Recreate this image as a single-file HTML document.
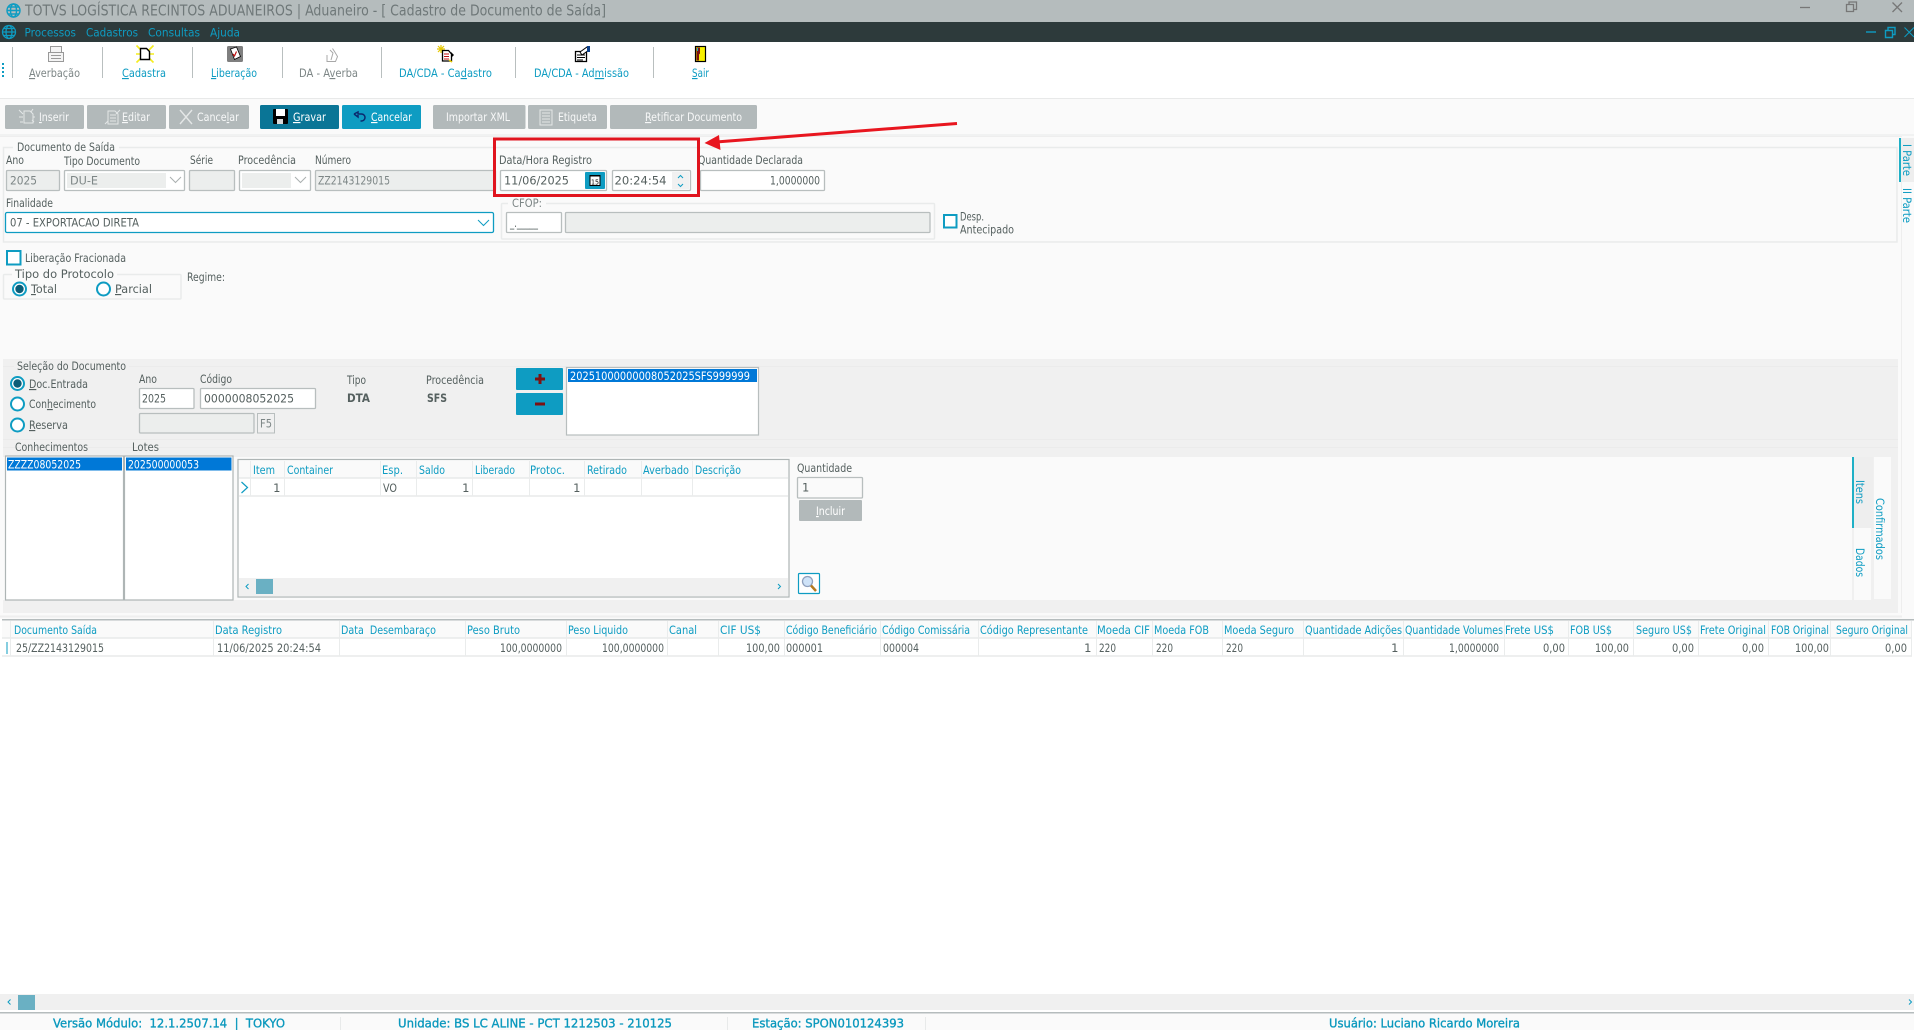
<!DOCTYPE html>
<html lang="pt-BR">
<head>
<meta charset="utf-8">
<title>TOTVS LOGÍSTICA RECINTOS ADUANEIROS</title>
<style>
html,body{margin:0;padding:0;width:1914px;height:1030px;overflow:hidden;background:#fff}
svg{display:block;font-family:"DejaVu Sans","Liberation Sans",sans-serif;font-size:11.5px}
.l{fill:#55605f}
.d{fill:#7d8686}
.t{fill:#0e9cc2}
.w{fill:#fff}
.s{fill:#0a98bd;font-size:12.5px;stroke:#0a98bd;stroke-width:.35}
.u{text-decoration:underline}
.ib{fill:#fff;stroke:#b8bebe;stroke-width:1.3}
.ig{fill:#eceeed;stroke:#b8bebe;stroke-width:1.3}
.gb{fill:none;stroke:#e9ebeb;stroke-width:1.5}
.sep{stroke:#b9bfbf;stroke-width:1}
.gl{stroke:#e8eaea;stroke-width:1.5}
</style>
</head>
<body>
<svg width="1914" height="1030" viewBox="0 0 1914 1030" xmlns="http://www.w3.org/2000/svg">
<rect width="1914" height="1030" fill="#fff"/>

<!-- title bar -->
<rect width="1914" height="22" fill="#b5bcbd"/>
<g fill="none" stroke="#0e9cc2" stroke-width="1.4">
  <circle cx="13.5" cy="10.5" r="6.5"/><ellipse cx="13.5" cy="10.5" rx="3" ry="6.5"/><path d="M7 10.5h13M8.3 7h10.4M8.3 14h10.4"/>
</g>
<text x="25" y="15.5" textLength="581" lengthAdjust="spacingAndGlyphs" style="font-size:15px" fill="#6f7879">TOTVS LOGÍSTICA RECINTOS ADUANEIROS | Aduaneiro - [ Cadastro de Documento de Saída]</text>
<g fill="none" stroke="#777" stroke-width="1.3">
  <path d="M1800 7.5h10"/>
  <path d="M1846.5 4.5h7v7h-7zM1849 4.5v-2.5h7.5v7.5h-3"/>
  <path d="M1892.5 2.5l9.5 9.5M1902 2.5l-9.5 9.5"/>
</g>

<!-- menu bar -->
<rect y="22" width="1914" height="20" fill="#2d3a3b"/>
<g fill="none" stroke="#0e9cc2" stroke-width="1.3">
  <circle cx="9" cy="32" r="6.5"/><ellipse cx="9" cy="32" rx="3" ry="6.5"/><path d="M2.5 32h13M4 28.5h10M4 35.5h10"/>
</g>
<text class="t" x="24.5" y="36.5" textLength="51.5" lengthAdjust="spacingAndGlyphs">Processos</text>
<text class="t" x="86" y="36.5" textLength="52" lengthAdjust="spacingAndGlyphs">Cadastros</text>
<text class="t" x="148" y="36.5" textLength="52" lengthAdjust="spacingAndGlyphs">Consultas</text>
<text class="t" x="210" y="36.5" textLength="30" lengthAdjust="spacingAndGlyphs">Ajuda</text>
<g fill="none" stroke="#0e9cc2" stroke-width="1.4">
  <path d="M1866 32h10"/>
  <path d="M1885.5 30.5h7v7h-7zM1888 30.5v-3h7v7h-2.5"/>
  <path d="M1904.5 27.5l9.5 9.5M1914 27.5l-9.5 9.5" stroke-width="1"/>
</g>

<!-- toolbar -->
<g fill="#0e9cc2"><rect x="2" y="63" width="2" height="2"/><rect x="2" y="67" width="2" height="2"/><rect x="2" y="71" width="2" height="2"/><rect x="2" y="75" width="2" height="2"/></g>
<g class="sep"><path d="M12.5 47v31M102.5 47v31M192.5 47v31M282.5 47v31M381.5 47v31M515.5 47v31M653.5 47v31"/></g>

<!-- Averbacao icon -->
<g fill="#f4f4f4" stroke="#999" stroke-width="1"><rect x="50.5" y="46.5" width="11" height="6"/><rect x="48.5" y="52.5" width="15" height="9"/><path d="M51 55.5h10M51 58.5h10" fill="none"/></g>
<!-- Cadastra icon -->
<g><path d="M136.500 45.500l17 17M153.500 45.500l-17 17M136 54h18" stroke="#f6ee1e" stroke-width="1.600"/><path d="M140.500 48.500h6l3 3v8h-9z" fill="#fff" stroke="#000" stroke-width="1.400"/></g>
<!-- Liberacao icon -->
<g><rect x="227" y="46" width="16" height="16" rx="1.5" fill="#7f7f7f"/><path d="M230.5 49l6-2 4 9.5-6 3z" fill="#fff" stroke="#000" stroke-width=".8"/><path d="M233 54l1.5 2 2-4.5" fill="none" stroke="#c01010" stroke-width="1.2"/></g>
<!-- DA-Averba icon -->
<g fill="none" stroke="#a8a8a8" stroke-width="1"><path d="M326.5 61.5h9l2-5-3-5-2-3M330 50l3 3-2 7M327 55v6"/></g>
<!-- DA/CDA Cadastro icon -->
<g><path d="M438 46l6 6M444 46l-6 6M441 45v8M437 49h8" stroke="#e6c800" stroke-width="1.2"/><path d="M442.5 50.5h6l3 3.5v7h-9z" fill="#fff" stroke="#000" stroke-width="1.3"/><path d="M444 54h5M444 56.5h5M444 59h5" stroke="#c01010" stroke-width="1"/><path d="M451 52l3 3-3 3z" fill="#000"/><path d="M449 60l3 2" stroke="#e6c800" stroke-width="1.6"/></g>
<!-- Admissao icon -->
<g><path d="M575.5 51.5h11v10h-11z" fill="#fff" stroke="#000" stroke-width="1.3"/><path d="M577 55h8M577 57.5h8M577 60h6" stroke="#000" stroke-width="1"/><path d="M580 52l7-5 2 3-7 5z" fill="#fff" stroke="#000" stroke-width="1"/><rect x="587" y="46" width="3" height="6" fill="#0b3f8a"/></g>
<!-- Sair icon -->
<g><rect x="695.5" y="46.5" width="10" height="15" fill="#f8f000" stroke="#000" stroke-width="1.2"/><path d="M696.5 47.5h3.5v6l-1 1v6h-2.5z" fill="#7d1111"/><rect x="697" y="48" width="1" height="3" fill="#18b4c8"/></g>

<text class="d" x="29" y="77" textLength="51" lengthAdjust="spacingAndGlyphs"><tspan class="u">A</tspan>verbação</text>
<text class="t" x="122" y="77" textLength="44" lengthAdjust="spacingAndGlyphs"><tspan class="u">C</tspan>adastra</text>
<text class="t" x="211" y="77" textLength="46" lengthAdjust="spacingAndGlyphs"><tspan class="u">L</tspan>iberação</text>
<text class="d" x="299" y="77" textLength="59" lengthAdjust="spacingAndGlyphs">DA - A<tspan class="u">v</tspan>erba</text>
<text class="t" x="399" y="77" textLength="93" lengthAdjust="spacingAndGlyphs">DA/CDA - Ca<tspan class="u">d</tspan>astro</text>
<text class="t" x="534" y="77" textLength="95" lengthAdjust="spacingAndGlyphs">DA/CDA - Ad<tspan class="u">m</tspan>issão</text>
<text class="t" x="692" y="77" textLength="17" lengthAdjust="spacingAndGlyphs"><tspan class="u">S</tspan>air</text>

<!-- main background -->
<rect y="98" width="1914" height="915" fill="#fafafa"/>
<rect y="98" width="1914" height="1" fill="#e8e9e9"/>
<rect y="134.5" width="1914" height="1" fill="#e8e9e9"/>
<rect y="136" width="1902" height="1" fill="#eeeeee"/>

<!-- buttons -->
<g fill="#b2b9ba">
  <rect x="5" y="105" width="79" height="24" rx="1.5"/><rect x="87" y="105" width="79" height="24" rx="1.5"/><rect x="169" y="105" width="80" height="24" rx="1.5"/>
  <rect x="433" y="105" width="92.500" height="24" rx="1.5"/><rect x="528" y="105" width="79" height="24" rx="1.5"/><rect x="610" y="105" width="147" height="24" rx="1.5"/>
</g>
<rect x="260" y="105" width="79" height="24" rx="1.5" fill="#0a7596"/>
<rect x="342" y="105" width="79" height="24" rx="1.5" fill="#0e9cc2"/>
<g fill="none" stroke="#e4e7e7" stroke-width="1">
  <path d="M24 111h6l3 3v9h-9zM19 110l4 4M33 109l-2 3M20 122h3M19 117h4M35 117h-2M34 122l-2-2"/>
  <path d="M108 111h7l3 3v10h-10zM110 115h6M110 118h6M110 121h6M105 124l3-3M120 110l-4 4"/>
  <path d="M180 110l12 14M192 110l-12 14" stroke-width="1.4"/>
  <path d="M540 110h12v15h-12zM542 113h8M542 116h8M542 119h8M542 122h8"/>
</g>
<g><rect x="273" y="109" width="15" height="15" rx="1" fill="#000"/><rect x="276" y="109" width="9" height="7" fill="#fff"/><rect x="277" y="119" width="6" height="5" fill="#d8d8d8"/></g>
<path d="M354 114l4-2v2h3.500a3.500 3.500 0 0 1 0 7h-1M354 114l4 3v-2" fill="none" stroke="#0b2a6e" stroke-width="1.5"/>
<g class="w">
  <text class="w" x="39" y="121" textLength="30" lengthAdjust="spacingAndGlyphs" opacity=".9"><tspan class="u">I</tspan>nserir</text>
  <text class="w" x="122" y="121" textLength="28" lengthAdjust="spacingAndGlyphs" opacity=".9"><tspan class="u">E</tspan>ditar</text>
  <text class="w" x="197" y="121" textLength="42" lengthAdjust="spacingAndGlyphs" opacity=".9">Cance<tspan class="u">l</tspan>ar</text>
  <text class="w" x="293" y="121" textLength="33" lengthAdjust="spacingAndGlyphs"><tspan class="u">G</tspan>ravar</text>
  <text class="w" x="371" y="121" textLength="41" lengthAdjust="spacingAndGlyphs"><tspan class="u">C</tspan>ancelar</text>
  <text class="w" x="446" y="121" textLength="64" lengthAdjust="spacingAndGlyphs" opacity=".9">Importar XML</text>
  <text class="w" x="558" y="121" textLength="39" lengthAdjust="spacingAndGlyphs" opacity=".9">Etiqueta</text>
  <text class="w" x="645" y="121" textLength="97" lengthAdjust="spacingAndGlyphs" opacity=".9"><tspan class="u">R</tspan>etificar Documento</text>
</g>

<!-- Documento de Saida group -->
<rect class="gb" x="3.500" y="147.500" width="1893.500" height="94.500"/>
<rect x="13" y="141" width="106" height="12" fill="#fafafa"/>
<text class="l" x="17" y="151" textLength="98" lengthAdjust="spacingAndGlyphs">Documento de Saída</text>

<text class="l" x="6" y="164" textLength="18" lengthAdjust="spacingAndGlyphs">Ano</text>
<text class="l" x="64" y="165" textLength="76" lengthAdjust="spacingAndGlyphs">Tipo Documento</text>
<text class="l" x="190" y="164" textLength="23" lengthAdjust="spacingAndGlyphs">Série</text>
<text class="l" x="238" y="164" textLength="58" lengthAdjust="spacingAndGlyphs">Procedência</text>
<text class="l" x="315" y="164" textLength="36" lengthAdjust="spacingAndGlyphs">Número</text>

<rect class="ig" x="6.500" y="170.500" width="53" height="20" rx="1"/>
<text class="d" x="10" y="184.500" textLength="27" lengthAdjust="spacingAndGlyphs">2025</text>
<rect class="ib" x="64.500" y="170.500" width="120" height="20" rx="1"/>
<rect x="67" y="173" width="99" height="15" fill="#eceeed"/>
<text class="d" x="70" y="184.500" textLength="28" lengthAdjust="spacingAndGlyphs">DU-E</text>
<path d="M170 177l5.500 5.500 5.500-5.500" fill="none" stroke="#aab0b0"/>
<rect class="ig" x="189.500" y="170.500" width="45" height="20" rx="1"/>
<rect class="ib" x="239.500" y="170.500" width="71" height="20" rx="1"/>
<rect x="242" y="173" width="49" height="15" fill="#eceeed"/>
<path d="M295 177l5.500 5.500 5.500-5.500" fill="none" stroke="#aab0b0"/>
<rect class="ig" x="315.500" y="170.500" width="180" height="20" rx="1"/>
<text class="d" x="318" y="184.500" textLength="72" lengthAdjust="spacingAndGlyphs">ZZ2143129015</text>

<text class="l" x="6" y="207" textLength="47" lengthAdjust="spacingAndGlyphs">Finalidade</text>
<rect x="5.500" y="212.500" width="488" height="20" rx="1.500" fill="#fff" stroke="#0e9cc2" stroke-width="1.300"/>
<text class="l" x="10" y="226.500" textLength="129" lengthAdjust="spacingAndGlyphs">07 - EXPORTACAO DIRETA</text>
<path d="M478 220l5.500 5.500 5.500-5.500" fill="none" stroke="#0e9cc2"/>

<rect class="gb" x="501.500" y="203.500" width="433" height="35.500" rx="1"/>
<rect x="508" y="198" width="38" height="11" fill="#fafafa"/>
<text class="d" x="512" y="207" textLength="30" lengthAdjust="spacingAndGlyphs">CFOP:</text>
<rect class="ib" x="506.500" y="212.500" width="55" height="20" rx="1"/>
<text class="l" x="510" y="227" textLength="28" lengthAdjust="spacingAndGlyphs">_._____</text>
<rect class="ig" x="565.500" y="212.500" width="364.500" height="20" rx="1"/>
<rect x="944" y="215" width="12.500" height="12.500" fill="#fff" stroke="#0e9cc2" stroke-width="2"/>
<text class="l" x="960" y="220.500" textLength="24" lengthAdjust="spacingAndGlyphs">Desp.</text>
<text class="l" x="960" y="233.500" textLength="54" lengthAdjust="spacingAndGlyphs">Antecipado</text>

<!-- Data/Hora -->
<text class="l" x="499" y="164" textLength="93" lengthAdjust="spacingAndGlyphs">Data/Hora Registro</text>
<rect class="ib" x="500.500" y="170.500" width="106" height="20" rx="1"/>
<text class="l" x="504" y="184.500" textLength="65" lengthAdjust="spacingAndGlyphs">11/06/2025</text>
<rect x="585" y="172" width="20" height="17" rx="1" fill="#0e9cc2"/>
<rect x="590" y="175.500" width="10" height="10" fill="#fff" stroke="#000" stroke-width="1"/>
<rect x="590" y="175" width="10" height="1.500" fill="#000"/>
<text x="591" y="184.500" style="font-size:7px" textLength="8" lengthAdjust="spacingAndGlyphs" fill="#000">15</text>
<rect class="ib" x="612.500" y="170.500" width="78" height="20" rx="1"/>
<text class="l" x="614.500" y="184.500" textLength="52" lengthAdjust="spacingAndGlyphs">20:24:54</text>
<rect x="672" y="172" width="17" height="17" fill="#f1f1f1"/>
<path d="M678 178l2.500-2.500 2.500 2.500M678 184l2.500 2.500 2.500-2.500" fill="none" stroke="#0e9cc2"/>
<text class="l" x="698" y="164" textLength="105" lengthAdjust="spacingAndGlyphs">Quantidade Declarada</text>
<rect class="ib" x="700.500" y="170.500" width="124" height="20" rx="1"/>
<text class="l" x="770" y="184.500" textLength="50" lengthAdjust="spacingAndGlyphs">1,0000000</text>
<!-- red box & arrow -->
<rect x="494.500" y="139" width="204" height="56.500" fill="none" stroke="#e0141e" stroke-width="3"/>
<path d="M957 123.500L716 142" stroke="#e8161f" stroke-width="3" fill="none"/>
<path d="M704.500 143L719 135l1.500 15z" fill="#e8161f"/>

<!-- I/II Parte tabs -->
<rect x="1899" y="138" width="15" height="44" fill="#eeeeee"/>
<rect x="1899" y="138" width="2" height="44" fill="#1fb0c6"/>
<path d="M1901.500 182v437" stroke="#eeeeee" stroke-width="1"/>
<text class="t" transform="translate(1903,144) rotate(90)" textLength="32" lengthAdjust="spacingAndGlyphs" style="font-size:11.500px" x="0" y="0">I Parte</text>
<text class="t" transform="translate(1903,188) rotate(90)" textLength="35" lengthAdjust="spacingAndGlyphs" style="font-size:11.500px" x="0" y="0">II Parte</text>

<!-- Liberacao Fracionada -->
<rect x="7" y="251" width="13.500" height="13.500" fill="#fff" stroke="#0e9cc2" stroke-width="2"/>
<text class="l" x="25" y="262" textLength="101" lengthAdjust="spacingAndGlyphs">Liberação Fracionada</text>
<rect class="gb" x="3.500" y="274.500" width="177.500" height="24.500" rx="1"/>
<rect x="12" y="268" width="105" height="12" fill="#fafafa"/>
<text class="l" x="15" y="278" textLength="99" lengthAdjust="spacingAndGlyphs">Tipo do Protocolo</text>
<circle cx="19.500" cy="289" r="6.500" fill="#fff" stroke="#0e9cc2" stroke-width="2"/>
<circle cx="19.500" cy="289" r="4.200" fill="#0b5d78"/>
<text class="l" x="31" y="293" textLength="26" lengthAdjust="spacingAndGlyphs"><tspan class="u">T</tspan>otal</text>
<circle cx="103.500" cy="289" r="6.500" fill="#fff" stroke="#0e9cc2" stroke-width="2"/>
<text class="l" x="115" y="293" textLength="37" lengthAdjust="spacingAndGlyphs"><tspan class="u">P</tspan>arcial</text>
<text class="l" x="187" y="281" textLength="38" lengthAdjust="spacingAndGlyphs">Regime:</text>

<!-- Selecao do Documento panel -->
<rect x="3" y="359" width="1895" height="254" fill="#f0f0f0"/>
<path d="M3 366.500h1895M3 439.500h1895M3 447.500h1895" stroke="#ebebeb" stroke-width="1"/>
<rect x="14" y="360" width="115" height="12" fill="#f0f0f0"/>
<text class="l" x="17" y="370" textLength="109" lengthAdjust="spacingAndGlyphs">Seleção do Documento</text>
<circle cx="17.500" cy="383.500" r="6.500" fill="#fff" stroke="#0e9cc2" stroke-width="2"/>
<circle cx="17.500" cy="383.500" r="4.200" fill="#0b5d78"/>
<circle cx="17.500" cy="404" r="6.500" fill="#fff" stroke="#0e9cc2" stroke-width="2"/>
<circle cx="17.500" cy="425" r="6.500" fill="#fff" stroke="#0e9cc2" stroke-width="2"/>
<text class="l" x="29" y="388" textLength="59" lengthAdjust="spacingAndGlyphs"><tspan class="u">D</tspan>oc.Entrada</text>
<text class="l" x="29" y="408" textLength="67" lengthAdjust="spacingAndGlyphs">Con<tspan class="u">h</tspan>ecimento</text>
<text class="l" x="29" y="429" textLength="39" lengthAdjust="spacingAndGlyphs"><tspan class="u">R</tspan>eserva</text>
<text class="l" x="139" y="383" textLength="18" lengthAdjust="spacingAndGlyphs">Ano</text>
<text class="l" x="200" y="383" textLength="32" lengthAdjust="spacingAndGlyphs">Código</text>
<rect class="ib" x="139.500" y="388.500" width="54.500" height="20" rx="1"/>
<text class="l" x="142" y="402.500" textLength="24" lengthAdjust="spacingAndGlyphs">2025</text>
<rect class="ib" x="200.500" y="388.500" width="115" height="20" rx="1"/>
<text class="l" x="204" y="402.500" textLength="90" lengthAdjust="spacingAndGlyphs">0000008052025</text>
<rect class="ig" x="139.500" y="413.500" width="114.500" height="19.500" rx="1"/>
<rect x="257.500" y="413.500" width="17" height="19.500" fill="#f0f0f0" stroke="#b8bebe"/>
<text class="d" x="260" y="427.500" textLength="12" lengthAdjust="spacingAndGlyphs">F5</text>
<text class="l" x="347" y="384" textLength="19" lengthAdjust="spacingAndGlyphs">Tipo</text>
<text class="l" x="426" y="384" textLength="58" lengthAdjust="spacingAndGlyphs">Procedência</text>
<text class="l" x="347" y="402" textLength="23" lengthAdjust="spacingAndGlyphs" style="font-weight:700">DTA</text>
<text class="l" x="427" y="402" textLength="20" lengthAdjust="spacingAndGlyphs" style="font-weight:700">SFS</text>
<rect x="516" y="368" width="47" height="22" rx="1" fill="#0e9cc2"/>
<rect x="516" y="393" width="47" height="22" rx="1" fill="#0e9cc2"/>
<path d="M540 374v10M535 379h10" stroke="#7d1111" stroke-width="3"/>
<path d="M535 404h10" stroke="#7d1111" stroke-width="3"/>
<rect x="566.500" y="367.500" width="192" height="67.500" fill="#fff" stroke="#b8bebe" stroke-width="1.200"/>
<rect x="568" y="369" width="189" height="13" fill="#0078d7"/>
<text class="w" x="570" y="380" textLength="180" lengthAdjust="spacingAndGlyphs">20251000000008052025SFS999999</text>

<text class="l" x="15" y="451" textLength="73" lengthAdjust="spacingAndGlyphs">Conhecimentos</text>
<text class="l" x="132" y="451" textLength="27" lengthAdjust="spacingAndGlyphs">Lotes</text>

<rect x="3" y="457" width="1849" height="143" fill="#fafafa"/>
<rect x="5.500" y="456" width="118" height="144" fill="#fff" stroke="#aeb5b5" stroke-width="1.200"/>
<rect x="7" y="457.500" width="115" height="13" fill="#0078d7"/>
<text class="w" x="8" y="468.500" textLength="73" lengthAdjust="spacingAndGlyphs">ZZZZ08052025</text>
<rect x="124.500" y="456" width="108.500" height="144" fill="#fff" stroke="#aeb5b5" stroke-width="1.200"/>
<rect x="126" y="457.500" width="105.500" height="13" fill="#0078d7"/>
<text class="w" x="128" y="468.500" textLength="71" lengthAdjust="spacingAndGlyphs">202500000053</text>

<!-- items grid -->
<rect x="238" y="459.500" width="551" height="137.500" fill="#fff" stroke="#aeb5b5" stroke-width="1.200"/>
<rect x="239" y="460.500" width="549" height="17.500" fill="#fafafa"/>
<path d="M239 478h549M239 496h549" stroke="#e8eaea" stroke-width="1.500"/>
<path d="M250.500 461v35M284.500 461v35M380.500 461v35M416.500 461v35M472.500 461v35M529.500 461v35M584.500 461v35M641.500 461v35M692.500 461v35" stroke="#eaecec" stroke-width="1"/>
<g class="t">
<text class="t" x="253" y="474" textLength="22" lengthAdjust="spacingAndGlyphs">Item</text>
<text class="t" x="287" y="474" textLength="46" lengthAdjust="spacingAndGlyphs">Container</text>
<text class="t" x="382" y="474" textLength="21" lengthAdjust="spacingAndGlyphs">Esp.</text>
<text class="t" x="419" y="474" textLength="26" lengthAdjust="spacingAndGlyphs">Saldo</text>
<text class="t" x="475" y="474" textLength="40" lengthAdjust="spacingAndGlyphs">Liberado</text>
<text class="t" x="530" y="474" textLength="35" lengthAdjust="spacingAndGlyphs">Protoc.</text>
<text class="t" x="587" y="474" textLength="40" lengthAdjust="spacingAndGlyphs">Retirado</text>
<text class="t" x="643" y="474" textLength="46" lengthAdjust="spacingAndGlyphs">Averbado</text>
<text class="t" x="695" y="474" textLength="46" lengthAdjust="spacingAndGlyphs">Descrição</text>
</g>
<path d="M241.500 482l6 5.500-6 5.500" fill="none" stroke="#0e9cc2" stroke-width="1.200"/>
<text class="l" x="280.500" y="492" text-anchor="end">1</text>
<text class="l" x="383" y="492" textLength="14" lengthAdjust="spacingAndGlyphs">VO</text>
<text class="l" x="469.500" y="492" text-anchor="end">1</text>
<text class="l" x="580.500" y="492" text-anchor="end">1</text>
<rect x="239" y="578" width="549" height="18" fill="#f0f0f0"/>
<rect x="256" y="579" width="17" height="15" fill="#6ab0c3"/>
<path d="M248.500 584l-2.500 2.500 2.500 2.500M778 584l2.500 2.500-2.500 2.500" fill="none" stroke="#0e9cc2"/>

<text class="l" x="797" y="472" textLength="55" lengthAdjust="spacingAndGlyphs">Quantidade</text>
<rect x="797.500" y="477.500" width="65" height="20.500" rx="1" fill="#fafafa" stroke="#b8bebe" stroke-width="1.300"/>
<text class="l" x="802" y="491.500">1</text>
<rect x="799" y="500" width="63" height="21" rx="1" fill="#b2b9ba"/>
<text class="w" x="816" y="515" textLength="29" lengthAdjust="spacingAndGlyphs"><tspan class="u">I</tspan>ncluir</text>
<rect x="798.500" y="573.500" width="21" height="20" rx="1" fill="#fff" stroke="#0e9cc2" stroke-width="1.200"/>
<circle cx="807.500" cy="581.500" r="5" fill="#cfe3f8" stroke="#8fa0bd" stroke-width="1.300"/>
<path d="M811 585.500l5 5.500" stroke="#b57a20" stroke-width="2.500"/>

<!-- Itens/Dados/Confirmados tabs -->
<rect x="1852" y="457" width="21" height="71" fill="#eeeeee"/>
<rect x="1852" y="457" width="2" height="71" fill="#1fb0c6"/>
<rect x="1854" y="528" width="17" height="72" fill="#fafafa"/>
<rect x="1874" y="457" width="17" height="142" fill="#fafafa"/>
<text class="t" transform="translate(1856,480) rotate(90)" textLength="24" lengthAdjust="spacingAndGlyphs" x="0" y="0">Itens</text>
<text class="t" transform="translate(1856,548) rotate(90)" textLength="29" lengthAdjust="spacingAndGlyphs" x="0" y="0">Dados</text>
<text class="t" transform="translate(1876,498) rotate(90)" textLength="62" lengthAdjust="spacingAndGlyphs" x="0" y="0">Confirmados</text>

<!-- lower grid -->
<rect y="613" width="1914" height="6" fill="#fafafa"/>
<rect x="0" y="615.500" width="1902" height="2" fill="#efefef"/>
<rect y="619" width="1914" height="400" fill="#fff"/>
<rect x="2" y="619" width="1912" height="1.500" fill="#b5bcbd"/>
<rect x="2" y="620.500" width="1910" height="17.500" fill="#fafafa"/>
<path d="M2 638h1910M2 656h1910" stroke="#e8eaea" stroke-width="1.500"/>
<path d="M10.500 621v35M213.500 621v35M339.500 621v35M465.500 621v35M566.500 621v35M667.500 621v35M718.500 621v35M784.500 621v35M880.500 621v35M978.500 621v35M1096.500 621v35M1152.500 621v35M1222.500 621v35M1303.500 621v35M1403.500 621v35M1504.500 621v35M1568.500 621v35M1633.500 621v35M1698.500 621v35M1768.500 621v35M1830.500 621v35M1911.500 621v35" stroke="#eaecec" stroke-width="1"/>
<text class="t" x="14" y="634" textLength="83" lengthAdjust="spacingAndGlyphs">Documento Saída</text>
<text class="t" x="215" y="634" textLength="67" lengthAdjust="spacingAndGlyphs">Data Registro</text>
<text class="t" x="341" y="634" textLength="95" lengthAdjust="spacingAndGlyphs" xml:space="preserve">Data  Desembaraço</text>
<text class="t" x="467" y="634" textLength="53" lengthAdjust="spacingAndGlyphs">Peso Bruto</text>
<text class="t" x="568" y="634" textLength="60" lengthAdjust="spacingAndGlyphs">Peso Liquido</text>
<text class="t" x="669" y="634" textLength="28" lengthAdjust="spacingAndGlyphs">Canal</text>
<text class="t" x="720" y="634" textLength="41" lengthAdjust="spacingAndGlyphs">CIF US$</text>
<text class="t" x="786" y="634" textLength="91" lengthAdjust="spacingAndGlyphs">Código Beneficiário</text>
<text class="t" x="882" y="634" textLength="88" lengthAdjust="spacingAndGlyphs">Código Comissária</text>
<text class="t" x="980" y="634" textLength="108" lengthAdjust="spacingAndGlyphs">Código Representante</text>
<text class="t" x="1097" y="634" textLength="53" lengthAdjust="spacingAndGlyphs">Moeda CIF</text>
<text class="t" x="1154" y="634" textLength="55" lengthAdjust="spacingAndGlyphs">Moeda FOB</text>
<text class="t" x="1224" y="634" textLength="70" lengthAdjust="spacingAndGlyphs">Moeda Seguro</text>
<text class="t" x="1305" y="634" textLength="97" lengthAdjust="spacingAndGlyphs">Quantidade Adições</text>
<text class="t" x="1405" y="634" textLength="98" lengthAdjust="spacingAndGlyphs">Quantidade Volumes</text>
<text class="t" x="1505" y="634" textLength="49" lengthAdjust="spacingAndGlyphs">Frete US$</text>
<text class="t" x="1570" y="634" textLength="42" lengthAdjust="spacingAndGlyphs">FOB US$</text>
<text class="t" x="1636" y="634" textLength="56" lengthAdjust="spacingAndGlyphs">Seguro US$</text>
<text class="t" x="1700" y="634" textLength="66" lengthAdjust="spacingAndGlyphs">Frete Original</text>
<text class="t" x="1771" y="634" textLength="58" lengthAdjust="spacingAndGlyphs">FOB Original</text>
<text class="t" x="1836" y="634" textLength="72" lengthAdjust="spacingAndGlyphs">Seguro Original</text>

<path d="M7 642v12" stroke="#0e9cc2" stroke-width="1"/>
<text class="l" x="16" y="652" textLength="88" lengthAdjust="spacingAndGlyphs">25/ZZ2143129015</text>
<text class="l" x="217" y="652" textLength="104" lengthAdjust="spacingAndGlyphs">11/06/2025 20:24:54</text>
<text class="l" x="500" y="652" textLength="62" lengthAdjust="spacingAndGlyphs">100,0000000</text>
<text class="l" x="602" y="652" textLength="62" lengthAdjust="spacingAndGlyphs">100,0000000</text>
<text class="l" x="746" y="652" textLength="34" lengthAdjust="spacingAndGlyphs">100,00</text>
<text class="l" x="786" y="652" textLength="37" lengthAdjust="spacingAndGlyphs">000001</text>
<text class="l" x="883" y="652" textLength="36" lengthAdjust="spacingAndGlyphs">000004</text>
<text class="l" x="1091.500" y="652" text-anchor="end">1</text>
<text class="l" x="1099" y="652" textLength="17" lengthAdjust="spacingAndGlyphs">220</text>
<text class="l" x="1156" y="652" textLength="17" lengthAdjust="spacingAndGlyphs">220</text>
<text class="l" x="1226" y="652" textLength="17" lengthAdjust="spacingAndGlyphs">220</text>
<text class="l" x="1398.500" y="652" text-anchor="end">1</text>
<text class="l" x="1449" y="652" textLength="50" lengthAdjust="spacingAndGlyphs">1,0000000</text>
<text class="l" x="1543" y="652" textLength="22" lengthAdjust="spacingAndGlyphs">0,00</text>
<text class="l" x="1595" y="652" textLength="34" lengthAdjust="spacingAndGlyphs">100,00</text>
<text class="l" x="1672" y="652" textLength="22" lengthAdjust="spacingAndGlyphs">0,00</text>
<text class="l" x="1742" y="652" textLength="22" lengthAdjust="spacingAndGlyphs">0,00</text>
<text class="l" x="1795" y="652" textLength="34" lengthAdjust="spacingAndGlyphs">100,00</text>
<text class="l" x="1885" y="652" textLength="22" lengthAdjust="spacingAndGlyphs">0,00</text>

<!-- bottom scrollbar -->
<rect y="994" width="1914" height="16" fill="#f0f0f0"/>
<rect x="18" y="995" width="17" height="15" fill="#6ab0c3"/>
<path d="M10.500 999.500l-2.500 2.500 2.500 2.500M1909 999.500l2.500 2.500-2.500 2.500" fill="none" stroke="#0e9cc2"/>
<rect y="1012" width="1914" height="1.500" fill="#b5bcbd"/>

<!-- status bar -->
<rect y="1013.500" width="1914" height="16.500" fill="#fafafa"/>
<path d="M340.500 1017v13M727.500 1017v13M925.500 1017v13" stroke="#e8eaea" stroke-width="1"/>
<text class="s" x="53" y="1027.500" textLength="232" lengthAdjust="spacingAndGlyphs" xml:space="preserve">Versão Módulo:  12.1.2507.14  |  TOKYO</text>
<text class="s" x="398" y="1027.500" textLength="274" lengthAdjust="spacingAndGlyphs">Unidade: BS LC ALINE - PCT 1212503 - 210125</text>
<text class="s" x="752" y="1027.500" textLength="152" lengthAdjust="spacingAndGlyphs">Estação: SPON010124393</text>
<text class="s" x="1329" y="1027.500" textLength="191" lengthAdjust="spacingAndGlyphs">Usuário: Luciano Ricardo Moreira</text>
</svg>
</body>
</html>
